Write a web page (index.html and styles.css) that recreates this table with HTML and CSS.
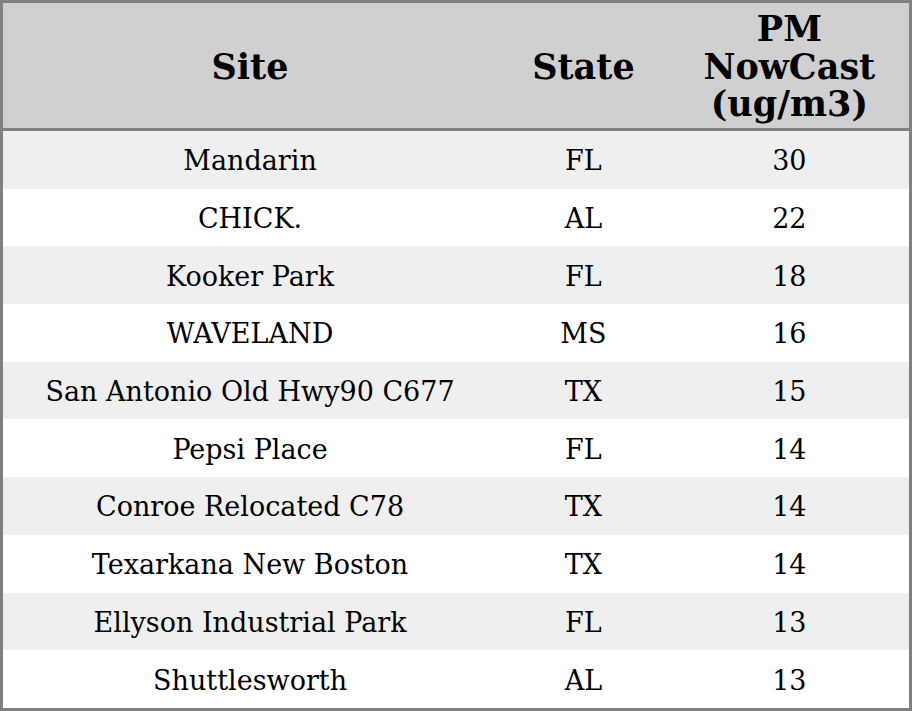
FILE: index.html
```html
<!DOCTYPE html>
<html>
<head>
<meta charset="utf-8">
<link rel="stylesheet" href="styles.css">
</head>
<body>
<table class="aq">
  <colgroup>
    <col class="c-site">
    <col class="c-state">
    <col class="c-pm">
  </colgroup>
  <thead>
    <tr><th>Site</th><th>State</th><th>PM<br>NowCast<br>(ug/m3)</th></tr>
  </thead>
  <tbody>
    <tr><td>Mandarin</td><td>FL</td><td>30</td></tr>
    <tr><td>CHICK.</td><td>AL</td><td>22</td></tr>
    <tr><td>Kooker Park</td><td>FL</td><td>18</td></tr>
    <tr><td>WAVELAND</td><td>MS</td><td>16</td></tr>
    <tr><td>San Antonio Old Hwy90 C677</td><td>TX</td><td>15</td></tr>
    <tr><td>Pepsi Place</td><td>FL</td><td>14</td></tr>
    <tr><td>Conroe Relocated C78</td><td>TX</td><td>14</td></tr>
    <tr><td>Texarkana New Boston</td><td>TX</td><td>14</td></tr>
    <tr><td>Ellyson Industrial Park</td><td>FL</td><td>13</td></tr>
    <tr><td>Shuttlesworth</td><td>AL</td><td>13</td></tr>
  </tbody>
</table>
</body>
</html>
```
FILE: styles.css
```css
html, body {
  margin: 0;
  padding: 0;
  background: #ffffff;
}
.aq {
  width: 912px;
  height: 711px;
  border-collapse: collapse;
  border: 3px solid #808080;
  font-family: "DejaVu Serif", serif;
  color: #000;
  table-layout: fixed;
}
.c-site { width: 494px; }
.c-state { width: 172px; }
.c-pm { width: 240px; }
.aq th {
  background: #d0d0d0;
  font-size: 35px;
  font-weight: bold;
  line-height: 37.5px;
  height: 123px;
  padding: 2px 0 0;
  text-align: center;
  vertical-align: middle;
  border-bottom: 3px solid #808080;
}
.aq td {
  font-size: 27px;
  height: 55.7px;
  padding: 2px 0 0;
  text-align: center;
  vertical-align: middle;
}
.aq tbody tr:nth-child(odd) td { background: #efefef; }
.aq tbody tr:nth-child(even) td { background: #ffffff; }
```
